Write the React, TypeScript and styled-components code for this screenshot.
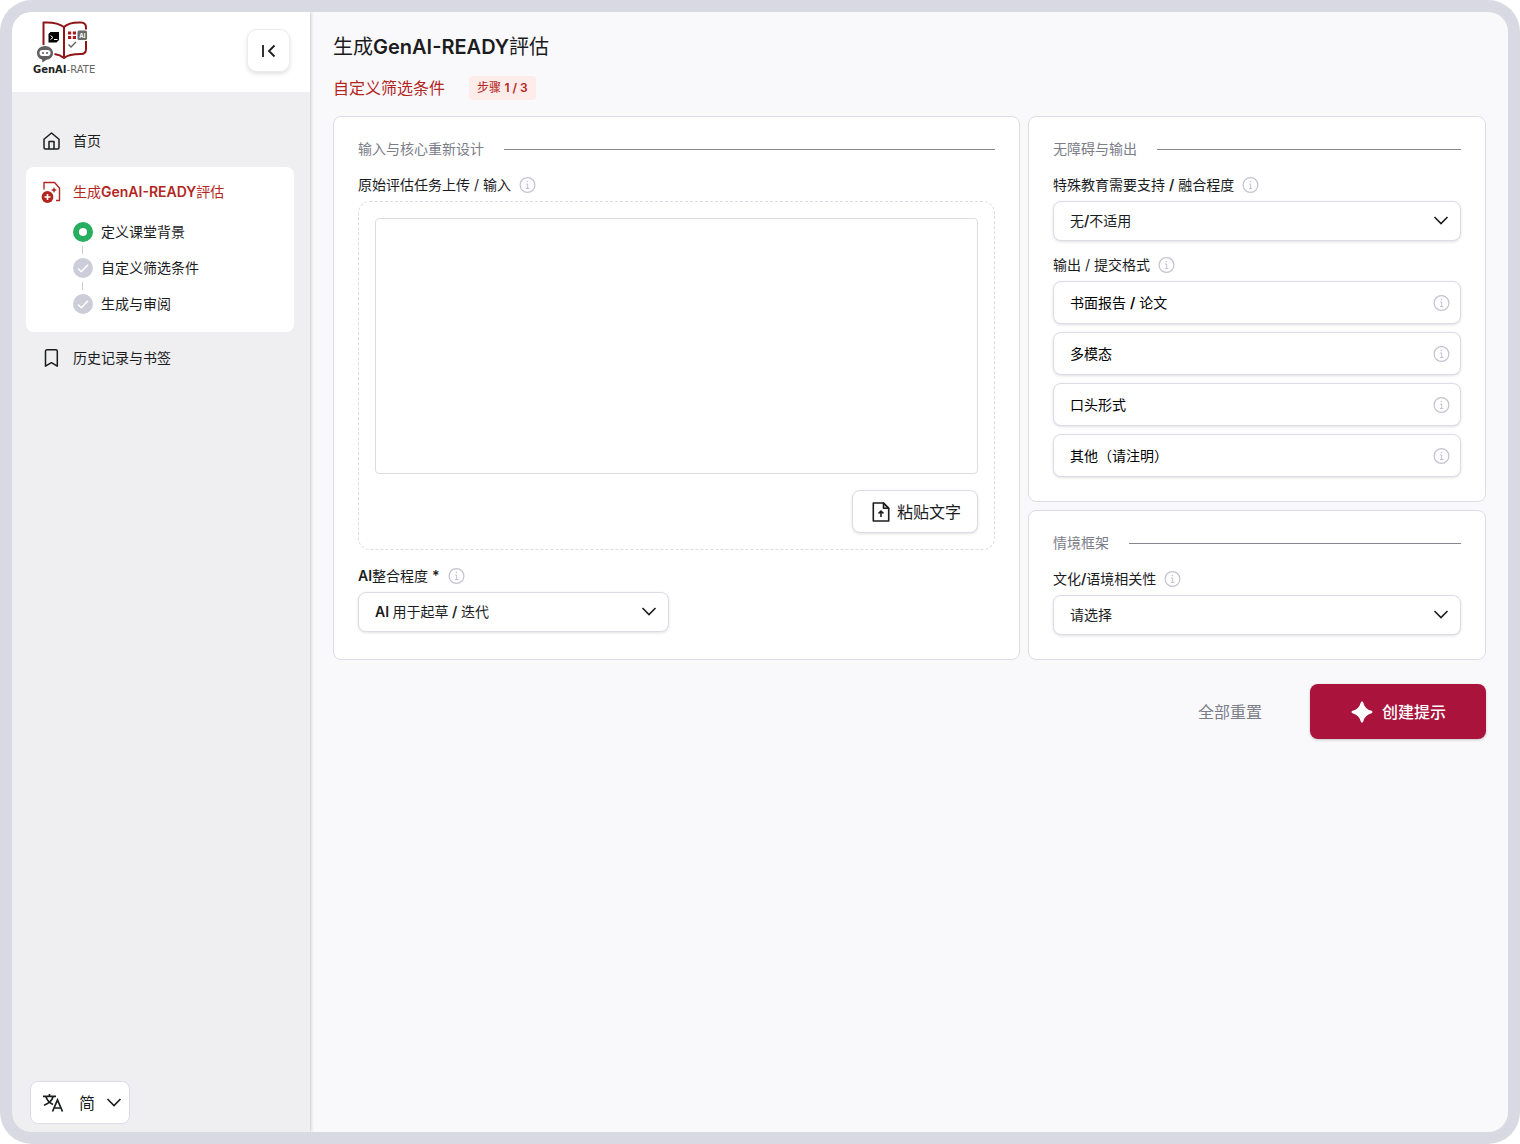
import React, { useState } from 'react';
import styled, { createGlobalStyle, css } from 'styled-components';

const color = {
  frame: '#d9d9e3',
  page: '#f9f9fc',
  sidebar: '#efeff1',
  border: '#dcdce5',
  text: '#1b1c1e',
  muted: '#7b7d89',
  hint: '#c3c3d1',
  red: '#b3261e',
  crimson: '#a9133c',
  green: '#27ae60',
  idle: '#cdcdd9',
};

const GlobalStyle = createGlobalStyle`
  *, *::before, *::after { box-sizing: border-box; }
  body {
    margin: 0;
    background: #fff;
    color: ${color.text};
    font-family: Inter, "Noto Sans CJK SC", "Noto Sans CJK TC", sans-serif;
    font-size: 14px;
    line-height: 20px;
  }
  button, select, textarea { font: inherit; color: inherit; }
  button, select { cursor: pointer; }
  svg { display: block; flex: none; }
`;

const Frame = styled.div`
  display: flex;
  min-height: 100vh;
  padding: 12px;
  border-radius: 32px;
  background: ${color.frame};
`;

const Shell = styled.div`
  display: flex;
  flex: 1;
  min-width: 0;
  overflow: hidden;
  border-radius: 20px;
  background: ${color.page};
`;

const Sidebar = styled.aside`
  display: flex;
  flex-direction: column;
  flex: none;
  width: 298px;
  background: ${color.sidebar};
  box-shadow: 0 0 4px rgba(0, 0, 0, 0.3);
`;

const SidebarHeader = styled.header`
  display: flex;
  align-items: flex-start;
  justify-content: space-between;
  height: 80px;
  padding: 8px 20px 0;
  background: #fff;
`;

const IconButton = styled.button`
  display: grid;
  place-items: center;
  width: 43px;
  height: 43px;
  margin-top: 9px;
  padding: 0;
  border: 1px solid #ececf0;
  border-radius: 10px;
  background: #fff;
  box-shadow: 0 2px 4px rgba(0, 0, 0, 0.12);
`;

const Nav = styled.nav`
  display: flex;
  flex: 1;
  flex-direction: column;
  gap: 1px;
  padding: 24px 16px 24px 14px;
`;

const NavLink = styled.a<{ $active?: boolean }>`
  display: flex;
  align-items: center;
  gap: 12px;
  height: 50px;
  padding: 0 15px;
  color: ${(p) => (p.$active ? color.red : color.text)};
  text-decoration: none;
`;

const NavGroup = styled.div`
  padding-bottom: 18px;
  border-radius: 8px;
  background: #fff;
`;

const Steps = styled.ol`
  display: flex;
  flex-direction: column;
  gap: 16px;
  margin: 0;
  padding: 5px 0 0 47px;
  list-style: none;
`;

const Step = styled.li`
  position: relative;
  display: flex;
  align-items: center;
  gap: 8px;

  & + &::before {
    content: '';
    position: absolute;
    top: -12px;
    left: 9px;
    width: 1px;
    height: 8px;
    background: ${color.idle};
  }
`;

const SidebarFooter = styled.footer`
  padding: 8px 18px;
`;

const Strong = styled.b`
  font-weight: 600;
`;

const Main = styled.main`
  display: flex;
  flex: 1;
  flex-direction: column;
  gap: 16px;
  min-width: 0;
  padding: 20px 22px 24px 23px;
`;

const PageHeader = styled.header`
  display: flex;
  flex-direction: column;
  gap: 14px;
`;

const Title = styled.h1`
  margin: 0;
  font-size: 20px;
  font-weight: 400;
  line-height: 30px;
`;

const SubHeader = styled.div`
  display: flex;
  align-items: center;
  gap: 24px;
  color: ${color.red};
`;

const Subtitle = styled.h2`
  margin: 0;
  font-size: 16px;
  font-weight: 400;
  line-height: 24px;
`;

const Badge = styled.span`
  padding: 0 8px;
  border-radius: 4px;
  background: #fdece9;
  font-size: 12px;
  line-height: 24px;
`;

const Columns = styled.form`
  display: grid;
  grid-template-columns: 3fr 2fr;
  gap: 8px;
`;

const Stack = styled.div`
  display: flex;
  flex-direction: column;
  gap: 8px;
  min-width: 0;
`;

const Card = styled.section`
  display: flex;
  flex-direction: column;
  gap: 16px;
  min-width: 0;
  padding: 24px;
  border: 1px solid ${color.border};
  border-radius: 8px;
  background: #fff;
`;

const CardTitle = styled.h3`
  display: flex;
  align-items: center;
  gap: 20px;
  margin: 0 0 4px;
  color: ${color.muted};
  font-size: 14px;
  font-weight: 400;
  line-height: 16px;

  &::after {
    content: '';
    flex: 1;
    height: 1px;
    background: #85868f;
  }
`;

const Field = styled.div`
  display: flex;
  flex-direction: column;
  gap: 8px;
  min-width: 0;
`;

const LabelRow = styled.div`
  display: flex;
  align-items: center;
  gap: 8px;
  line-height: 16px;
`;

const HalfRow = styled.div`
  display: grid;
  grid-template-columns: 1fr 1fr;
  gap: 16px;
  padding-top: 2px;
`;

const control = css`
  border: 1px solid ${color.border};
  border-radius: 8px;
  background: #fff;
  box-shadow: 0 1px 3px rgba(0, 0, 0, 0.12);
`;

const SelectBox = styled.div`
  display: grid;
  align-items: center;

  & > * { grid-area: 1 / 1; }
  & > svg {
    justify-self: end;
    margin-right: 12px;
    pointer-events: none;
  }
`;

const Select = styled.select`
  ${control}
  appearance: none;
  width: 100%;
  height: 40px;
  padding: 0 40px 0 16px;
  font-family: "Inter SemiBold", Inter, "Noto Sans CJK SC", sans-serif;
`;

const LanguageBox = styled.div`
  display: inline-grid;
  align-items: center;
  width: 100px;

  & > * { grid-area: 1 / 1; }
  & > svg { margin-left: 12px; pointer-events: none; }
  & > svg:last-child { justify-self: end; margin: 0 8px 0 0; }
`;

const LanguageSelect = styled.select`
  appearance: none;
  width: 100%;
  height: 43px;
  padding: 0 32px 0 48px;
  border: 1px solid ${color.border};
  border-radius: 8px;
  background: #fff;
  font-size: 16px;
`;

const DropZone = styled.div`
  display: flex;
  flex-direction: column;
  align-items: flex-end;
  gap: 16px;
  padding: 16px;
  border: 1px dashed ${color.border};
  border-radius: 12px;
`;

const TextArea = styled.textarea`
  display: block;
  width: 100%;
  height: 256px;
  padding: 12px;
  border: 1px solid ${color.border};
  border-radius: 4px;
  background: #fff;
  resize: none;
`;

const PasteButton = styled.button`
  ${control}
  display: flex;
  align-items: center;
  gap: 4px;
  height: 43px;
  padding: 0 16px;
  font-size: 16px;
`;

const Options = styled.div`
  display: flex;
  flex-direction: column;
  gap: 8px;
`;

const Option = styled.button`
  ${control}
  display: flex;
  align-items: center;
  justify-content: space-between;
  height: 43px;
  padding: 0 10px 0 16px;
  color: #000;
  text-align: left;

  &[aria-pressed='true'] { border-color: ${color.crimson}; }
`;

const Actions = styled.div`
  display: flex;
  align-items: center;
  justify-content: flex-end;
  gap: 24px;
  padding-top: 8px;
`;

const ResetButton = styled.button`
  height: 55px;
  padding: 0 24px;
  border: 0;
  background: none;
  color: ${color.muted};
  font-size: 16px;
`;

const CreateButton = styled.button`
  display: flex;
  align-items: center;
  gap: 8px;
  height: 55px;
  padding: 0 40px;
  border: 0;
  border-radius: 8px;
  background: ${color.crimson};
  box-shadow: 0 1px 3px rgba(0, 0, 0, 0.2);
  color: #fff;
  font-size: 16px;
  font-weight: 500;
`;

const Logo = () => (
  <svg width="66" height="56" viewBox="0 0 66 56" role="img" aria-label="GenAI-RATE">
    <g fill="none" stroke="#8f1519" strokeWidth="2" strokeLinejoin="round">
      <path d="M11.500 25V2.500c8-.5 15 .5 20.500 4.500v31c-3-2.500-6-3.500-9.500-4" />
      <path d="M32 7c4-4 10-4.800 17-4.500 3.500.2 5 1.500 5 5v2M54 21v8c0 4-2 5-5 5-6 0-13 .5-17 4" />
    </g>
    <path d="M18.500 12H27v8l-2.500 2.500h-8V14z" fill="#000" />
    <path d="m18.500 15.500 2.500 2-2.500 2M22 19.500h3.500" fill="none" stroke="#fff" strokeWidth="1" />
    <path d="M36 11.500h3.200v3H36zM40.800 11.500H44v3h-3.200zM36 16h3.200v3H36zM40.800 16H44v3h-3.200z" fill="#a51c22" />
    <rect x="45.500" y="10.500" width="9.500" height="9.500" rx="1.500" fill="#6b6b6b" />
    <text x="50.250" y="17.500" textAnchor="middle" fontSize="6" fontWeight="700" fill="#fff">AI</text>
    <path d="m36.500 24.500 2.500 2.500 5-5" fill="none" stroke="#5c5c5c" strokeWidth="1.300" />
    <path d="M13 26c4.500 0 8 3 8 7s-3 6.500-6.500 6.800L10.500 42.500l-.5-3C7 38.800 5 36.500 5 33c0-4 3.500-7 8-7z" fill="#606060" />
    <rect x="7.500" y="30" width="11" height="6" rx="3" fill="#fff" />
    <circle cx="11" cy="33" r="1.100" fill="#606060" />
    <circle cx="15" cy="33" r="1.100" fill="#606060" />
    <text x="1" y="53" fontFamily="DejaVu Sans, sans-serif" fontSize="10" fill="#666">
      <tspan fontWeight="700" fill="#222">GenAI</tspan>-RATE
    </text>
  </svg>
);

const CollapseIcon = () => (
  <svg width="20" height="20" viewBox="0 0 20 20" fill="none" stroke={color.text} strokeWidth="1.800">
    <path d="M4 4v12M15.500 4.500 10 10l5.500 5.500" />
  </svg>
);

const HomeIcon = () => (
  <svg width="20" height="20" viewBox="0 0 20 20" fill="none" stroke={color.text} strokeWidth="1.500" strokeLinejoin="round">
    <path d="M3 8.300 10.500 2l7.500 6.300v8.200c0 .9-.6 1.500-1.500 1.500h-12c-.9 0-1.500-.6-1.500-1.500z" />
    <path d="M8 18v-7.500h5V18" />
  </svg>
);

const GenerateIcon = () => (
  <svg width="20" height="22" viewBox="0 0 20 22" fill="none">
    <path d="M3 8.500V1.500h10.500L18.500 7v12.500H15" stroke={color.red} strokeWidth="1.400" strokeLinejoin="round" />
    <path d="m13 6 .9 2.100 2.100.9-2.100.9L13 12l-.9-2.100L10 9l2.100-.9z" fill={color.red} />
    <circle cx="6.500" cy="16" r="5.900" fill={color.red} />
    <path d="M6.500 13v6M3.500 16h6" stroke="#fff" strokeWidth="1.600" />
  </svg>
);

const BookmarkIcon = () => (
  <svg width="20" height="20" viewBox="0 0 20 20" fill="none" stroke={color.text} strokeWidth="1.500" strokeLinejoin="round">
    <path d="M4.500 3.200c0-.9.500-1.400 1.400-1.400h9c.9 0 1.400.5 1.400 1.400v15l-5.900-3.500-5.900 3.500z" />
  </svg>
);

const CurrentStepIcon = () => (
  <svg width="20" height="20" viewBox="0 0 20 20">
    <circle cx="10" cy="10" r="10" fill={color.green} />
    <circle cx="10" cy="10" r="4" fill="#fff" />
  </svg>
);

const CheckStepIcon = () => (
  <svg width="20" height="20" viewBox="0 0 20 20">
    <circle cx="10" cy="10" r="10" fill={color.idle} />
    <path d="m5 10.500 3.300 3.200 6.700-7" fill="none" stroke="#fff" strokeWidth="1.600" />
  </svg>
);

const InfoIcon = () => (
  <svg width="17" height="16" viewBox="0 0 17 16" fill="none" stroke={color.hint}>
    <circle cx="8.500" cy="8" r="7.400" strokeWidth="1.200" />
    <path d="M7 7h1.700v4.500M7 11.500h3.300" />
    <circle cx="8.400" cy="4.500" r=".8" fill={color.hint} stroke="none" />
  </svg>
);

const ChevronIcon = () => (
  <svg width="16" height="16" viewBox="0 0 16 16" fill="none" stroke={color.text} strokeWidth="1.600">
    <path d="M1.500 4 8 10.500 14.500 4" />
  </svg>
);

const UploadFileIcon = () => (
  <svg width="24" height="24" viewBox="0 0 24 24" fill="none" stroke={color.text} strokeWidth="1.600" strokeLinejoin="round">
    <path d="M4.300 3h10.200l5.200 5.200V21H4.300z" />
    <path d="M14.500 3v5.200h5.200z" fill={color.text} fillOpacity=".15" />
    <path d="M12 17v-5.500M9.500 13.500 12 11l2.500 2.500" />
  </svg>
);

const SparkleIcon = () => (
  <svg width="24" height="24" viewBox="0 0 24 24" fill="#fff">
    <path d="M12 1.500c.7 0 1 .4 1.200 1 1.200 4.500 3.800 7.100 8.300 8.300.7.200 1 .6 1 1.200s-.3 1-1 1.200c-4.500 1.200-7.100 3.800-8.300 8.300-.2.600-.5 1-1.200 1s-1-.4-1.200-1c-1.200-4.500-3.800-7.100-8.300-8.300-.7-.2-1-.6-1-1.200s.3-1 1-1.200c4.500-1.200 7.100-3.800 8.300-8.300.2-.6.5-1 1.200-1z" />
  </svg>
);

const TranslateIcon = () => (
  <svg width="22" height="22" viewBox="0 0 22 22" fill="none" stroke={color.text} strokeWidth="1.700">
    <path d="M1 4.300h13M7.500 2v2.300M11.300 4.300c-1.300 4.200-4.500 7.400-9.300 9M4 5c1.300 3.500 3.800 6 7 7.500" />
    <path d="m10.500 19.500 5-11.500 5 11.500M12.200 16h6.600" />
  </svg>
);

const outputFormats: { id: string; label: React.ReactNode }[] = [
  { id: 'report', label: <span>书面报告 <Strong>/</Strong> 论文</span> },
  { id: 'multimodal', label: '多模态' },
  { id: 'oral', label: '口头形式' },
  { id: 'other', label: '其他（请注明）' },
];

type SelectFieldProps = { id: string; label: React.ReactNode; options: string[] };

const SelectField = ({ id, label, options }: SelectFieldProps) => (
  <Field>
    <LabelRow>
      <label htmlFor={id}>{label}</label>
      <InfoIcon />
    </LabelRow>
    <SelectBox>
      <Select id={id}>
        {options.map((o) => (
          <option key={o}>{o}</option>
        ))}
      </Select>
      <ChevronIcon />
    </SelectBox>
  </Field>
);

export default function App() {
  const [format, setFormat] = useState<string | null>(null);

  return (
    <>
      <GlobalStyle />
      <Frame>
        <Shell>
          <Sidebar>
            <SidebarHeader>
              <Logo />
              <IconButton type="button" aria-label="收起侧栏">
                <CollapseIcon />
              </IconButton>
            </SidebarHeader>
            <Nav>
              <NavLink href="#home">
                <HomeIcon />
                首页
              </NavLink>
              <NavGroup>
                <NavLink href="#generate" $active>
                  <GenerateIcon />
                  <span>生成<Strong>GenAI-READY</Strong>評估</span>
                </NavLink>
                <Steps>
                  <Step><CurrentStepIcon />定义课堂背景</Step>
                  <Step><CheckStepIcon />自定义筛选条件</Step>
                  <Step><CheckStepIcon />生成与审阅</Step>
                </Steps>
              </NavGroup>
              <NavLink href="#history">
                <BookmarkIcon />
                历史记录与书签
              </NavLink>
            </Nav>
            <SidebarFooter>
              <LanguageBox>
                <LanguageSelect aria-label="语言">
                  <option>简</option>
                  <option>繁</option>
                </LanguageSelect>
                <TranslateIcon />
                <ChevronIcon />
              </LanguageBox>
            </SidebarFooter>
          </Sidebar>

          <Main>
            <PageHeader>
              <Title>生成<Strong>GenAI-READY</Strong>評估</Title>
              <SubHeader>
                <Subtitle>自定义筛选条件</Subtitle>
                <Badge>步骤 <Strong>1 / 3</Strong></Badge>
              </SubHeader>
            </PageHeader>

            <Columns id="criteria" onReset={() => setFormat(null)} onSubmit={(e) => e.preventDefault()}>
              <Card>
                <CardTitle>输入与核心重新设计</CardTitle>
                <Field>
                  <LabelRow>
                    <label htmlFor="task">原始评估任务上传 / 输入</label>
                    <InfoIcon />
                  </LabelRow>
                  <DropZone>
                    <TextArea id="task" />
                    <PasteButton type="button">
                      <UploadFileIcon />
                      粘贴文字
                    </PasteButton>
                  </DropZone>
                </Field>
                <HalfRow>
                  <SelectField
                    id="integration"
                    label={<><Strong>AI</Strong>整合程度 <Strong>*</Strong></>}
                    options={['AI 用于起草 / 迭代']}
                  />
                </HalfRow>
              </Card>

              <Stack>
                <Card>
                  <CardTitle>无障碍与输出</CardTitle>
                  <SelectField
                    id="support"
                    label={<>特殊教育需要支持 <Strong>/</Strong> 融合程度</>}
                    options={['无/不适用']}
                  />
                  <Field role="group" aria-labelledby="format-label">
                    <LabelRow>
                      <span id="format-label">输出 / 提交格式</span>
                      <InfoIcon />
                    </LabelRow>
                    <Options>
                      {outputFormats.map(({ id, label }) => (
                        <Option key={id} type="button" aria-pressed={format === id} onClick={() => setFormat(id)}>
                          {label}
                          <InfoIcon />
                        </Option>
                      ))}
                    </Options>
                  </Field>
                </Card>
                <Card>
                  <CardTitle>情境框架</CardTitle>
                  <SelectField
                    id="culture"
                    label={<>文化<Strong>/</Strong>语境相关性</>}
                    options={['请选择']}
                  />
                </Card>
              </Stack>
            </Columns>

            <Actions>
              <ResetButton type="reset" form="criteria">全部重置</ResetButton>
              <CreateButton type="submit" form="criteria">
                <SparkleIcon />
                创建提示
              </CreateButton>
            </Actions>
          </Main>
        </Shell>
      </Frame>
    </>
  );
}
